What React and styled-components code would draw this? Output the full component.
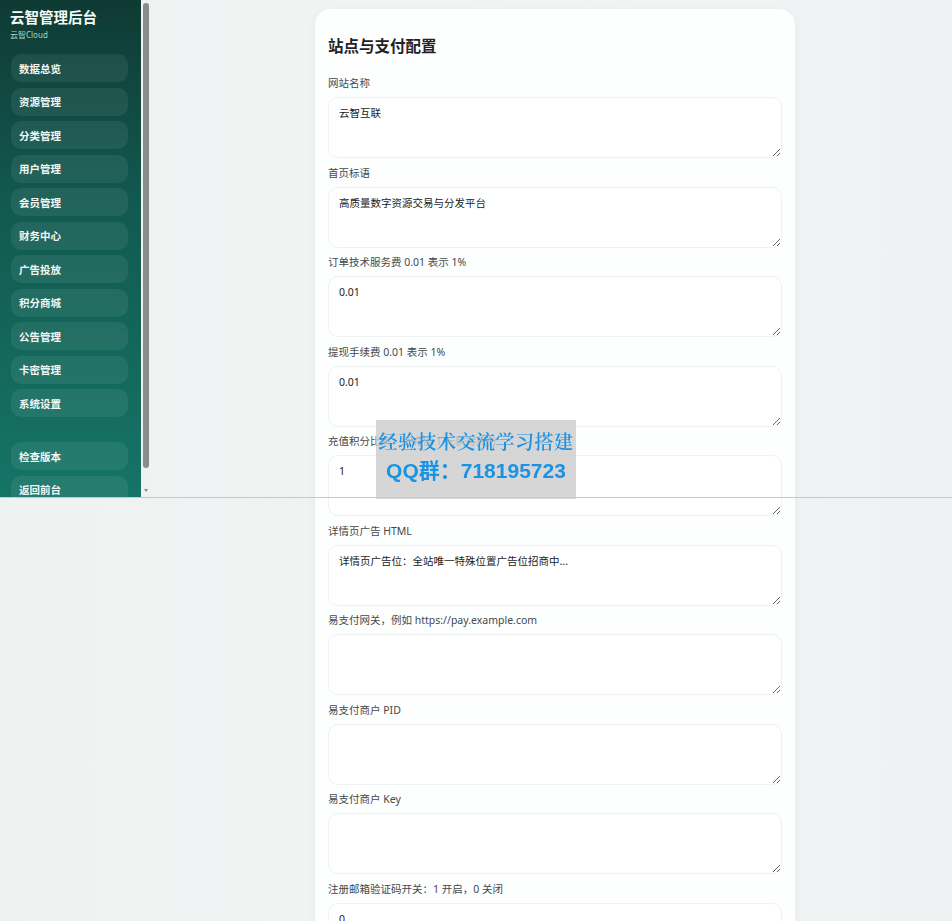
import styled, { createGlobalStyle } from "styled-components";

const fields = [
  { label: "网站名称", value: "云智互联" },
  { label: "首页标语", value: "高质量数字资源交易与分发平台" },
  { label: "订单技术服务费 0.01 表示 1%", value: "0.01" },
  { label: "提现手续费 0.01 表示 1%", value: "0.01" },
  { label: "充值积分比例：每充值 1 元获得积分", value: "1" },
  { label: "详情页广告 HTML", value: "详情页广告位：全站唯一特殊位置广告位招商中..." },
  { label: "易支付网关，例如 https://pay.example.com", value: "" },
  { label: "易支付商户 PID", value: "" },
  { label: "易支付商户 Key", value: "" },
  { label: "注册邮箱验证码开关：1 开启，0 关闭", value: "0" },
  { label: "站点公告", value: "" },
];

const menu = [
  "数据总览",
  "资源管理",
  "分类管理",
  "用户管理",
  "会员管理",
  "财务中心",
  "广告投放",
  "积分商城",
  "公告管理",
  "卡密管理",
  "系统设置",
];

const App = () => {
  return (
    <>
      <GlobalStyle />
      <Main>
        <Card>
          <Title>站点与支付配置</Title>
          {fields.map((f) => (
            <Field key={f.label}>
              <Label>{f.label}</Label>
              <Input defaultValue={f.value} />
            </Field>
          ))}
        </Card>
      </Main>
      <TopFrame>
        <Sidebar>
          <SideInner>
            <Brand>云智管理后台</Brand>
            <SubBrand>云智Cloud</SubBrand>
            <Nav>
              {menu.map((m) => (
                <NavItem key={m}>{m}</NavItem>
              ))}
            </Nav>
            <Nav $bottom>
              <NavItem>检查版本</NavItem>
              <NavItem>返回前台</NavItem>
            </Nav>
          </SideInner>
          {/* fake scrollbar, headless shots hide the native one */}
          <ScrollTrack>
            <Thumb />
            <ArrowDown />
          </ScrollTrack>
        </Sidebar>
      </TopFrame>
      <Watermark>
        <WmLine>经验技术交流学习搭建</WmLine>
        <WmQQ>QQ群：718195723</WmQQ>
      </Watermark>
    </>
  );
};

export default App;

const GlobalStyle = createGlobalStyle`
  * {
    box-sizing: border-box;
  }
  body {
    margin: 0;
    background: linear-gradient(90deg, #eef2f1 0%, #f1f4f4 60%, #eef2f2 100%);
    font-family: "Noto Sans", "Noto Sans CJK SC", sans-serif;
    color: #222;
  }
`;

const Main = styled.main`
  padding: 9px 0 40px 158px;
`;

const Card = styled.section`
  width: 480px;
  margin: 0 auto;
  background: #fdfefe;
  border-radius: 16px;
  padding: 24px 13px 20px;
  box-shadow: 0 2px 10px rgba(20, 60, 55, 0.04);
`;

const Title = styled.h2`
  margin: 0 0 15px;
  font-size: 15.5px;
  font-weight: 700;
  color: #1f2328;
  line-height: 26px;
`;

const Field = styled.div`
  display: flex;
  flex-direction: column;
  gap: 5px;
  margin-bottom: 5.5px;
`;

const Label = styled.label`
  font-size: 10.5px;
  line-height: 18px;
  color: #45494c;
`;

const Input = styled.textarea`
  display: block;
  width: 100%;
  height: 61px;
  padding: 7px 10px;
  border: 1px solid #f0f2f1;
  border-radius: 10px;
  background: #fff;
  font-family: "Noto Sans", "Noto Sans CJK SC", sans-serif;
  font-size: 10.5px;
  line-height: 16px;
  color: #222;
  outline: none;
`;

const TopFrame = styled.div`
  position: fixed;
  top: 0;
  left: 0;
  right: 0;
  height: 498px;
  border-bottom: 1px solid #c5c9c9;
  pointer-events: none;
`;

const Sidebar = styled.aside`
  width: 150px;
  height: 497px;
  display: flex;
  pointer-events: auto;
`;

const SideInner = styled.div`
  width: 141px;
  height: 100%;
  overflow: hidden;
  padding: 7px 13px 30px 11px;
  background: linear-gradient(180deg, #0f3a34 0%, #12594f 40%, #157466 100%);
`;

const ScrollTrack = styled.div`
  width: 9px;
  height: 100%;
  background: #f1f1f1;
  display: flex;
  flex-direction: column;
  align-items: center;
  padding-top: 3px;
`;

const Thumb = styled.div`
  width: 6px;
  height: 465px;
  border-radius: 3px;
  background: #8c8c8c;
`;

const ArrowDown = styled.div`
  margin-top: 21px;
  width: 0;
  height: 0;
  border-left: 2.5px solid transparent;
  border-right: 2.5px solid transparent;
  border-top: 3px solid #8a8a8a;
`;

const Brand = styled.div`
  font-size: 14.5px;
  font-weight: 700;
  color: #f4fbf9;
  line-height: 20px;
  margin-left: -1px;
`;

const SubBrand = styled.div`
  font-size: 8px;
  color: #9fd9cc;
  line-height: 12px;
  margin: 2px 0 13px -1px;
`;

const Nav = styled.nav`
  display: flex;
  flex-direction: column;
  gap: 5.5px;
  margin-top: ${(p) => (p.$bottom ? "25px" : "0")};
`;

const NavItem = styled.div`
  height: 28px;
  display: flex;
  align-items: center;
  padding-left: 8px;
  border-radius: 10px;
  background: rgba(255, 255, 255, 0.07);
  color: #f2f7f5;
  font-size: 10.5px;
  font-weight: 700;
`;

const Watermark = styled.div`
  position: fixed;
  left: 376px;
  top: 420px;
  width: 200px;
  height: 79px;
  background: rgba(205, 205, 205, 0.82);
  display: flex;
  flex-direction: column;
  align-items: center;
  padding-top: 9px;
`;

const WmLine = styled.div`
  font-family: "Noto Serif CJK SC", "AR PL UKai CN", "Liberation Serif", serif;
  font-size: 19px;
  font-weight: 600;
  line-height: 24px;
  color: #1a93e4;
  letter-spacing: 0.5px;
  white-space: nowrap;
`;

const WmQQ = styled.div`
  font-family: "Liberation Sans", "Noto Sans CJK SC", sans-serif;
  font-size: 21px;
  font-weight: 700;
  line-height: 28px;
  margin-top: 4px;
  color: #1a93e4;
  white-space: nowrap;
`;
